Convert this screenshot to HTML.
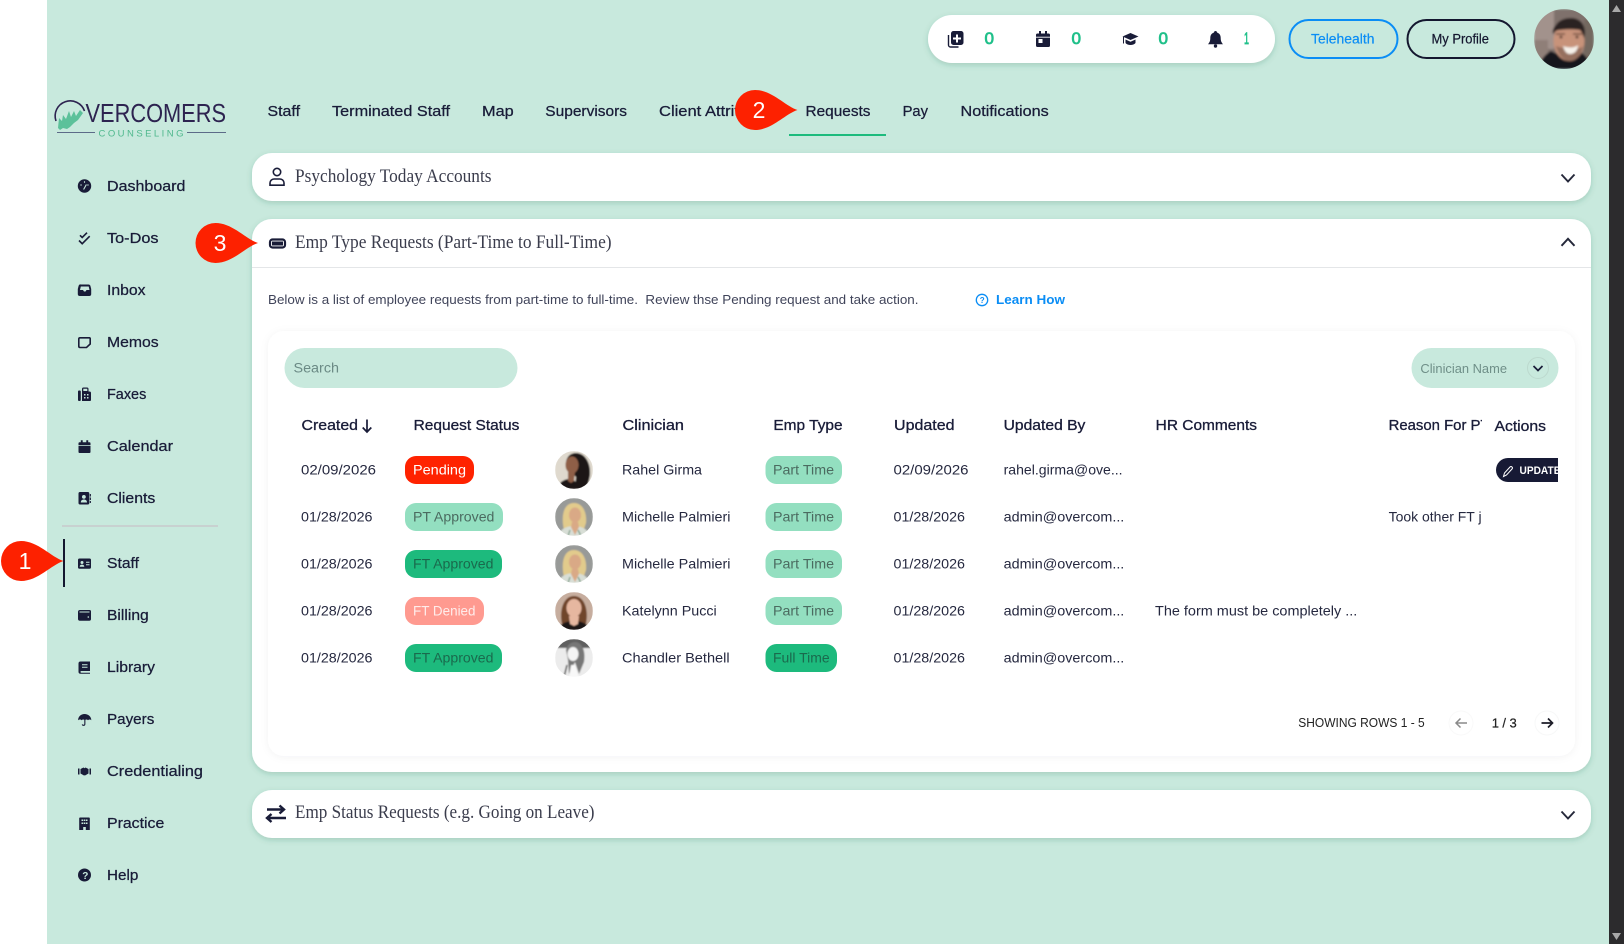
<!DOCTYPE html>
<html lang="en">
<head>
<meta charset="utf-8">
<title>Requests</title>
<style>
html,body{margin:0;padding:0;background:#fff;width:1624px;height:944px;overflow:hidden}
svg{display:block;position:absolute;left:0;top:0}
text{font-family:"Liberation Sans",sans-serif;white-space:pre}
.m{font-size:14.5px;fill:#191c38;stroke:#191c38;stroke-width:.25}
.h{font-size:14.3px;fill:#191c38;stroke:#191c38;stroke-width:.3}
.c{font-size:13.6px;fill:#25283f}
.p{font-size:13.6px}
.s{font-family:"Liberation Serif",serif;font-size:18.5px;fill:#3a3c4c}
.d{font-size:16.5px;fill:#20c08a;stroke:#20c08a;stroke-width:.7}
.w{font-size:23px;fill:#fff}
.i{fill:#191c38}
</style>
</head>
<body>
<svg xmlns="http://www.w3.org/2000/svg" width="1624" height="944" viewBox="0 0 1624 944">
<defs>
<filter id="sh" x="-5%" y="-30%" width="110%" height="170%"><feDropShadow dx="0" dy="2" stdDeviation="3" flood-color="#1d6a50" flood-opacity=".22"/></filter>
<filter id="sh2" x="-5%" y="-5%" width="110%" height="110%"><feDropShadow dx="0" dy="1" stdDeviation="4" flood-color="#30304a" flood-opacity=".05"/></filter>
<filter id="bl"><feGaussianBlur stdDeviation=".7"/></filter>
<filter id="bl2"><feGaussianBlur stdDeviation="1.100"/></filter>
<clipPath id="cr"><rect x="1385" y="410" width="97" height="130"/></clipPath>
<clipPath id="cu"><rect x="1490" y="450" width="68" height="40"/></clipPath>
<clipPath id="a0"><circle cx="1564" cy="39" r="30"/></clipPath>
<clipPath id="a1"><circle cx="574" cy="470" r="19"/></clipPath>
<clipPath id="a2"><circle cx="574" cy="517" r="19"/></clipPath>
<clipPath id="a3"><circle cx="574" cy="564" r="19"/></clipPath>
<clipPath id="a4"><circle cx="574" cy="611" r="19"/></clipPath>
<clipPath id="a5"><circle cx="574" cy="658" r="19"/></clipPath>
</defs>

<!-- page -->
<rect x="47" y="0" width="1562" height="944" fill="#c8e9dd"/>
<rect x="1609" y="0" width="15" height="944" fill="#2c2b2d"/>
<path d="M1616.500 5l4.500 7h-9z" fill="#a8a8a8"/>
<path d="M1612 933h9l-4.500 7z" fill="#a8a8a8"/>

<!-- top pill -->
<rect x="928" y="15" width="347" height="48" rx="24" fill="#fff" filter="url(#sh)"/>
<g class="i">
<path d="M948.500 35v10a2 2 0 0 0 2 2h8" fill="none" stroke="#191c38" stroke-width="1.400"/>
<path fill-rule="evenodd" d="M953.500 31h7.500a2.500 2.500 0 0 1 2.500 2.500v9a2.500 2.500 0 0 1-2.500 2.500h-7.500a2.500 2.500 0 0 1-2.500-2.500v-9a2.500 2.500 0 0 1 2.500-2.500zm2.500 3.500v3h-3v2h3v3h2v-3h3v-2h-3v-3z"/>
<path fill-rule="evenodd" d="M1039 31h2v2.500h4V31h2v2.500h1.500a1.500 1.500 0 0 1 1.500 1.500v10.500a1.500 1.500 0 0 1-1.500 1.500h-11a1.500 1.500 0 0 1-1.500-1.500V35a1.500 1.500 0 0 1 1.500-1.500h1.500zm-.5 8v4h4v-4zM1036 36.700h14v.9h-14z"/>
<path d="M1130.500 33l8 3.500-8 3.500-8-3.500z"/>
<path d="M1125.500 39.500l5 2.200 5-2.200v3.500c-1 1.300-3 2-5 2s-4-.7-5-2z"/>
<rect x="1123" y="37" width="1" height="6.500"/>
<path d="M1215.500 31c1 0 1.500.7 1.500 1.500 2.500.8 3.700 2.800 3.700 5.500 0 3 .8 4.500 2.300 6.200h-15c1.500-1.700 2.300-3.200 2.300-6.200 0-2.700 1.200-4.700 3.700-5.500 0-.8.500-1.500 1.500-1.500z"/>
<circle cx="1215.500" cy="46" r="1.700"/>
</g>
<text class="d" x="984.500" y="44" textLength="9.500" lengthAdjust="spacingAndGlyphs">0</text>
<text class="d" x="1071.500" y="44" textLength="9.500" lengthAdjust="spacingAndGlyphs">0</text>
<text class="d" x="1158.500" y="44" textLength="9.500" lengthAdjust="spacingAndGlyphs">0</text>
<text class="d" x="1244" y="44" textLength="5" lengthAdjust="spacingAndGlyphs">1</text>

<!-- buttons -->
<rect x="1289.500" y="20" width="108" height="38" rx="19" fill="#c8e9dd" stroke="#0a8df5" stroke-width="2"/>
<text x="1311" y="43.500" font-size="13.500" fill="#0a8df5" stroke="#0a8df5" stroke-width=".2" textLength="63.500" lengthAdjust="spacingAndGlyphs">Telehealth</text>
<rect x="1407.500" y="20" width="107" height="38" rx="19" fill="#c8e9dd" stroke="#14172f" stroke-width="2"/>
<text x="1431.500" y="43.500" font-size="13.500" fill="#14172f" stroke="#14172f" stroke-width=".2" textLength="57.500" lengthAdjust="spacingAndGlyphs">My Profile</text>

<!-- man avatar -->
<g clip-path="url(#a0)"><g filter="url(#bl2)">
<rect x="1534" y="9" width="60" height="60" fill="#7f716c"/>
<rect x="1534" y="9" width="20" height="40" fill="#a2928c"/>
<rect x="1534" y="40" width="14" height="30" fill="#8f7f78"/>
<rect x="1584" y="20" width="10" height="40" fill="#73675f"/>
<path d="M1540 69c0-9 4-14 11-18l17 8 14-6c5 4 8 9 9 16z" fill="#15161f"/>
<ellipse cx="1569" cy="41" rx="15.500" ry="20" fill="#c8937a"/>
<path d="M1553 34c-1-4 1-7 3-9 3-5 9-7 15-7 8 0 14 5 14 15l-1 5c-1-3-2-6-4-8-7-1-13-1-20 0-3 0-5 1-7 4z" fill="#2c2320"/>
<path d="M1556 46c3 10 8 15 14 15s11-5 13-15c-3 3-6 3-10 1-4 0-11 2-17-1z" fill="#96705e"/>
<path d="M1563 46c4 2 12 2 15-1 0 5-3 9-8 9-4 0-6-4-7-8z" fill="#f6f1ea"/>
<path d="M1556 34h9M1573 34h9" stroke="#5a3d30" stroke-width="1.300"/>
<circle cx="1561" cy="37" r="1.300" fill="#2a1c18"/><circle cx="1577" cy="37" r="1.300" fill="#2a1c18"/>
</g></g>

<!-- logo -->
<path d="M56 121a15 15 0 0 1 28.500-10" fill="none" stroke="#2d2350" stroke-width="1.600"/>
<path d="M58 128l1-10 3 3 1-6 3 4 3-8 2 6 3-6 2 5 4-6 3 3-5 7-4 3-4 4-3 2-4-1-3 2z" fill="#5cc19a"/>
<text x="85.500" y="122" font-size="26" fill="#2d2350" textLength="140.500" lengthAdjust="spacingAndGlyphs">VERCOMERS</text>
<text x="98.500" y="136.500" font-size="9.500" fill="#4fb88d" textLength="85" lengthAdjust="spacing">COUNSELING</text>
<path d="M57 132.500h38M187 132.500h39" stroke="#5c6b88" stroke-width="1"/>

<!-- tabs -->
<text class="m" x="267.500" y="116" textLength="32.500" lengthAdjust="spacingAndGlyphs">Staff</text>
<text class="m" x="332" y="116" textLength="118" lengthAdjust="spacingAndGlyphs">Terminated Staff</text>
<text class="m" x="482" y="116" textLength="31.700" lengthAdjust="spacingAndGlyphs">Map</text>
<text class="m" x="545.300" y="116" textLength="81.700" lengthAdjust="spacingAndGlyphs">Supervisors</text>
<text class="m" x="659" y="116" textLength="102" lengthAdjust="spacingAndGlyphs">Client Attrition</text>
<text class="m" x="805.500" y="116" textLength="65" lengthAdjust="spacingAndGlyphs">Requests</text>
<text class="m" x="902.600" y="116" textLength="25.400" lengthAdjust="spacingAndGlyphs">Pay</text>
<text class="m" x="960.500" y="116" textLength="88.200" lengthAdjust="spacingAndGlyphs">Notifications</text>
<rect x="789" y="134" width="97" height="2" fill="#1dbb7d"/>

<!-- sidebar text -->
<g>
<text class="m" x="107" y="191" textLength="78.400" lengthAdjust="spacingAndGlyphs">Dashboard</text>
<text class="m" x="107" y="243" textLength="51.500" lengthAdjust="spacingAndGlyphs">To-Dos</text>
<text class="m" x="107" y="295" textLength="38.500" lengthAdjust="spacingAndGlyphs">Inbox</text>
<text class="m" x="107" y="347" textLength="51.700" lengthAdjust="spacingAndGlyphs">Memos</text>
<text class="m" x="107" y="399" textLength="39.300" lengthAdjust="spacingAndGlyphs">Faxes</text>
<text class="m" x="107" y="451" textLength="66" lengthAdjust="spacingAndGlyphs">Calendar</text>
<text class="m" x="107" y="503" textLength="48.300" lengthAdjust="spacingAndGlyphs">Clients</text>
<text class="m" x="107" y="568" textLength="32" lengthAdjust="spacingAndGlyphs">Staff</text>
<text class="m" x="107" y="620" textLength="41.700" lengthAdjust="spacingAndGlyphs">Billing</text>
<text class="m" x="107" y="672" textLength="48" lengthAdjust="spacingAndGlyphs">Library</text>
<text class="m" x="107" y="724" textLength="47.300" lengthAdjust="spacingAndGlyphs">Payers</text>
<text class="m" x="107" y="776" textLength="96" lengthAdjust="spacingAndGlyphs">Credentialing</text>
<text class="m" x="107" y="828" textLength="57.300" lengthAdjust="spacingAndGlyphs">Practice</text>
<text class="m" x="107" y="880" textLength="31.300" lengthAdjust="spacingAndGlyphs">Help</text>
</g>
<rect x="62" y="525.500" width="156" height="1" fill="#c9b9c2"/>
<rect x="63" y="539" width="2" height="48" fill="#14172f"/>

<!-- sidebar icons -->
<g class="i">
<circle cx="84.500" cy="186" r="6.700"/>
<path d="M84.500 181.300v1.500M80.300 185h1.500M87.200 185h1.500M83.600 189.500l2.800-5" stroke="#c8e9dd" stroke-width="1.100" fill="none"/>
<path d="M80 235.300l2.200 2.200 4.800-4.800M79 240.500l3.200 3.200 7.500-7.500" stroke="#191c38" stroke-width="1.600" fill="none"/>
<path fill-rule="evenodd" d="M81 284.500h7.500a2 2 0 0 1 1.900 1.400l.8 3.100v5a2 2 0 0 1-2 2h-9.400a2 2 0 0 1-2-2v-5l.8-3.100a2 2 0 0 1 2.400-1.400zm-.2 2l-.8 3.500h3l1 1.500h1.500l1-1.500h3l-.8-3.500z"/>
<path d="M80 337.800h9.500a.7.700 0 0 1 .7.700V344l-3.700 3.500H80a1.200 1.200 0 0 1-1.200-1.200v-7.300a1.200 1.200 0 0 1 1.200-1.200z" fill="none" stroke="#191c38" stroke-width="1.600"/>
<rect x="78" y="390.500" width="2.800" height="10.500" rx="1"/>
<path fill-rule="evenodd" d="M82 391.500V389a1.500 1.500 0 0 1 1.500-1.500h3.500a1.500 1.500 0 0 1 1.500 1.500v2.500h1a1.500 1.500 0 0 1 1.500 1.500v7a1 1 0 0 1-1 1h-8zm1.300-.5h4v-2.200h-4zm.7 3v1.500h1.500V394zm3 0v1.500h1.500V394zm-3 3v1.500h1.500V397zm3 0v1.500h1.500V397z"/>
<path d="M80.800 440.300h1.900v2h3.600v-2h1.900v2h1.300a1 1 0 0 1 1 1v2H78.500v-2a1 1 0 0 1 1-1h1.300zM78.500 446h12v6a1 1 0 0 1-1 1h-10a1 1 0 0 1-1-1z"/>
<path fill-rule="evenodd" d="M80 492h7.800a1.500 1.500 0 0 1 1.500 1.500v9.500a1.500 1.500 0 0 1-1.500 1.500H80a1.500 1.500 0 0 1-1.500-1.500v-9.500A1.500 1.500 0 0 1 80 492zm3.900 3a1.900 1.900 0 1 0 0 3.800 1.900 1.900 0 0 0 0-3.800zm-3.100 7.500h6.200c0-2-1.300-3-3.100-3s-3.100 1-3.100 3z"/>
<rect x="89.800" y="494" width="1.100" height="2.500"/><rect x="89.800" y="497.500" width="1.100" height="2.500"/><rect x="89.800" y="501" width="1.100" height="2"/>
<path fill-rule="evenodd" d="M79.500 558.500h10a1.500 1.500 0 0 1 1.500 1.500v7.200a1.500 1.500 0 0 1-1.500 1.500h-10a1.500 1.500 0 0 1-1.500-1.500V560a1.500 1.500 0 0 1 1.500-1.500zm2.500 2.500a1.500 1.500 0 1 0 0 3 1.500 1.500 0 0 0 0-3zm-2.300 5.700h4.600c0-1.300-1-2.100-2.300-2.100s-2.300.8-2.300 2.100zm6.300-5v1h3.500v-1zm0 2.500v1h3.500v-1z"/>
<path fill-rule="evenodd" d="M80 610h9.500a1.500 1.500 0 0 1 1.500 1.500v7.500a1.700 1.700 0 0 1-1.700 1.700H79.800A1.800 1.800 0 0 1 78 619V612a2 2 0 0 1 2-2zm8.300 6.200a.8.800 0 1 0 0 1.600.8.800 0 0 0 0-1.600zM79.500 611.500v1h10v-1z"/>
<path fill-rule="evenodd" d="M80.500 661.500H90v9.500H81.300a.9.900 0 0 0 0 1.800H90v1H80.500a2 2 0 0 1-2-2v-8.300a2 2 0 0 1 2-2zm1.500 2.700v1.100h5.500v-1.100zm0 2.500v1.100h5.500v-1.100z"/>
<path d="M84.500 714c3.700 0 6.800 2.600 6.800 6.200-1-.9-2.300-.9-3.300 0-.8-.8-1.700-.9-2.600-.4v4.400a1.900 1.900 0 0 1-3.700.4l1.100-.3a.8.800 0 0 0 1.500-.1v-4.400c-.9-.5-1.800-.4-2.600.4-1-.9-2.300-.9-3.600 0 0-3.600 2.900-6.200 6.400-6.200z"/>
<path d="M78 768.500h1.500v6H78zM89.500 768.500H91v6h-1.500zM80.500 769l3-1.500 1 .7 1-.7 3 1.500v4.500l-3.500 2-.5-.3-.5.3-3.500-2z"/>
<path fill-rule="evenodd" d="M80 817.500h9a.8.800 0 0 1 .8.800v11.700H85.800v-3h-2.600v3H79.200V818.300a.8.800 0 0 1 .8-.8zm1.500 2v1.500h1.600v-1.500zm2.200 0v1.500h1.600v-1.500zm2.200 0v1.500h1.600v-1.500zm-4.400 3v1.500h1.600v-1.500zm2.200 0v1.500h1.600v-1.500zm2.200 0v1.500h1.600v-1.500z"/>
<circle cx="84.500" cy="875" r="6.500"/>
</g>
<text x="82.300" y="878.800" font-size="10" font-weight="700" fill="#c8e9dd">?</text>

<!-- cards -->
<rect x="252" y="153" width="1339" height="48" rx="20" fill="#fff" filter="url(#sh)"/>
<rect x="252" y="219" width="1339" height="553" rx="20" fill="#fff" filter="url(#sh)"/>
<rect x="252" y="267" width="1339" height="1" fill="#e4e6e8"/>
<rect x="252" y="790" width="1339" height="48" rx="20" fill="#fff" filter="url(#sh)"/>

<text class="s" x="295" y="182" textLength="196.500" lengthAdjust="spacingAndGlyphs">Psychology Today Accounts</text>
<text class="s" x="295" y="248" textLength="316.600" lengthAdjust="spacingAndGlyphs">Emp Type Requests (Part-Time to Full-Time)</text>
<text class="s" x="295" y="818" textLength="299.500" lengthAdjust="spacingAndGlyphs">Emp Status Requests (e.g. Going on Leave)</text>

<!-- card icons -->
<circle cx="277" cy="172" r="3.700" fill="none" stroke="#191c38" stroke-width="1.600"/>
<path d="M270 185.200v-2.200a4 4 0 0 1 4-4h6a4 4 0 0 1 4 4v2.200z" fill="none" stroke="#191c38" stroke-width="1.600"/>
<rect x="270" y="239.500" width="15" height="8" rx="2.500" fill="none" stroke="#191c38" stroke-width="2.200"/>
<rect x="272" y="241.500" width="11" height="4" fill="#191c38"/>
<path d="M267 809.500h17M279.500 805.500l4.500 4-4.500 4M286 818h-17M271.500 814l-4.500 4 4.500 4" fill="none" stroke="#191c38" stroke-width="2.400"/>
<path d="M1561.500 174.500l6.500 7 6.500-7" fill="none" stroke="#25283a" stroke-width="1.900"/>
<path d="M1561.500 245.800l6.500-7 6.500 7" fill="none" stroke="#25283a" stroke-width="1.900"/>
<path d="M1561.500 811.500l6.500 7 6.500-7" fill="none" stroke="#25283a" stroke-width="1.900"/>

<!-- description -->
<text x="268" y="304" font-size="12.600" fill="#40445a" textLength="650.500" lengthAdjust="spacingAndGlyphs">Below is a list of employee requests from part-time to full-time.  Review thse Pending request and take action.</text>
<circle cx="982" cy="300" r="5.700" fill="none" stroke="#0a8df5" stroke-width="1.300"/>
<text x="979.800" y="303" font-size="8" font-weight="700" fill="#0a8df5">?</text>
<text x="996" y="304" font-size="13.300" font-weight="700" fill="#0a8df5" textLength="69" lengthAdjust="spacingAndGlyphs">Learn How</text>

<!-- table card -->
<rect x="268" y="331" width="1307" height="425" rx="16" fill="#fff" filter="url(#sh2)"/>
<rect x="284.500" y="348" width="233" height="40" rx="20" fill="#c8e9dd"/>
<text x="293.500" y="372.500" font-size="13.500" fill="#6b8a85" textLength="45.500" lengthAdjust="spacingAndGlyphs">Search</text>
<rect x="1411.500" y="348" width="147" height="40" rx="20" fill="#c8e9dd"/>
<text x="1420.400" y="373" font-size="13" fill="#6f8f88" textLength="86.600" lengthAdjust="spacingAndGlyphs">Clinician Name</text>
<circle cx="1538" cy="368" r="10.500" fill="none" stroke="#bcd9ce" stroke-width="1"/>
<path d="M1533.500 366l4.500 4.500 4.500-4.500" fill="none" stroke="#191c38" stroke-width="1.700"/>

<!-- headers -->
<text class="h" x="301.500" y="430" textLength="56.500" lengthAdjust="spacingAndGlyphs">Created</text>
<path d="M367 419.500v12M362.700 427.500l4.300 4.500 4.300-4.500" fill="none" stroke="#191c38" stroke-width="1.700"/>
<text class="h" x="413.600" y="430" textLength="105.800" lengthAdjust="spacingAndGlyphs">Request Status</text>
<text class="h" x="622.500" y="430" textLength="61.500" lengthAdjust="spacingAndGlyphs">Clinician</text>
<text class="h" x="773.400" y="430" textLength="69.200" lengthAdjust="spacingAndGlyphs">Emp Type</text>
<text class="h" x="894" y="430" textLength="60.600" lengthAdjust="spacingAndGlyphs">Updated</text>
<text class="h" x="1003.600" y="430" textLength="81.800" lengthAdjust="spacingAndGlyphs">Updated By</text>
<text class="h" x="1155.700" y="430" textLength="101.300" lengthAdjust="spacingAndGlyphs">HR Comments</text>
<g clip-path="url(#cr)">
<text class="h" x="1388.600" y="430" textLength="101" lengthAdjust="spacingAndGlyphs">Reason For PT</text>
<text class="c" x="1388.600" y="521.500" textLength="93" lengthAdjust="spacingAndGlyphs">Took other FT j</text>
</g>
<text class="h" x="1494.500" y="431" textLength="51.500" lengthAdjust="spacingAndGlyphs">Actions</text>

<!-- rows: dates -->
<text class="c" x="301" y="474.500" textLength="75" lengthAdjust="spacingAndGlyphs">02/09/2026</text>
<text class="c" x="301" y="521.500" textLength="71.500" lengthAdjust="spacingAndGlyphs">01/28/2026</text>
<text class="c" x="301" y="568.500" textLength="71.500" lengthAdjust="spacingAndGlyphs">01/28/2026</text>
<text class="c" x="301" y="615.500" textLength="71.500" lengthAdjust="spacingAndGlyphs">01/28/2026</text>
<text class="c" x="301" y="662.500" textLength="71.500" lengthAdjust="spacingAndGlyphs">01/28/2026</text>

<!-- status pills -->
<rect x="405" y="456" width="69" height="28" rx="11" fill="#ff2200"/>
<text class="p" x="413" y="474.500" fill="#fff" textLength="53" lengthAdjust="spacingAndGlyphs">Pending</text>
<rect x="405" y="503" width="98" height="28" rx="11" fill="#93dfc0"/>
<text class="p" x="413" y="521.500" fill="#4b6b60" textLength="81.400" lengthAdjust="spacingAndGlyphs">PT Approved</text>
<rect x="405" y="550" width="97" height="28" rx="11" fill="#1dba7d"/>
<text class="p" x="413" y="568.500" fill="#1a6a4d" textLength="80.500" lengthAdjust="spacingAndGlyphs">FT Approved</text>
<rect x="405" y="597" width="79" height="28" rx="11" fill="#ff9a90"/>
<text class="p" x="413" y="615.500" fill="#ffecea" textLength="62.500" lengthAdjust="spacingAndGlyphs">FT Denied</text>
<rect x="405" y="644" width="97" height="28" rx="11" fill="#1dba7d"/>
<text class="p" x="413" y="662.500" fill="#1a6a4d" textLength="80.500" lengthAdjust="spacingAndGlyphs">FT Approved</text>

<!-- avatars -->
<g clip-path="url(#a1)"><g filter="url(#bl)">
<rect x="555" y="451" width="38" height="38" fill="#dfd9ce"/>
<path d="M566 462c1-6 5-9 10-9 9 0 15 10 14 22-1 6-2 10-5 14h-10l1-12-9-9z" fill="#1f1715"/>
<ellipse cx="572" cy="465" rx="6.500" ry="8.500" fill="#8f5f47"/>
<path d="M558 489l3-7c3-2 5-3 8-3 4 0 6 2 8 4l1 6z" fill="#1a1412"/>
<path d="M568 472h7l-1 9-3 2-3-2z" fill="#8f5f47"/>
</g></g>
<g clip-path="url(#a2)"><g filter="url(#bl)">
<rect x="555" y="498" width="38" height="38" fill="#989a98"/>
<path d="M564 530c-3-13-1-27 10-27 9 0 13 10 12 20l-2 6z" fill="#e2cb8c"/>
<ellipse cx="575" cy="515" rx="6" ry="7.500" fill="#d9a986"/>
<path d="M558 536c2-7 9-10 16-10s14 3 16 10z" fill="#d8ded6"/>
<path d="M572 522h6l1 5-4 8-4-8z" fill="#d9a986"/>
<path d="M578 530l3 6M570 530l-2 6" stroke="#5a8a70" stroke-width="1"/>
</g></g>
<g clip-path="url(#a3)"><g filter="url(#bl)">
<rect x="555" y="545" width="38" height="38" fill="#989a98"/>
<path d="M564 577c-3-13-1-27 10-27 9 0 13 10 12 20l-2 6z" fill="#e2cb8c"/>
<ellipse cx="575" cy="562" rx="6" ry="7.500" fill="#d9a986"/>
<path d="M558 583c2-7 9-10 16-10s14 3 16 10z" fill="#d8ded6"/>
<path d="M572 569h6l1 5-4 8-4-8z" fill="#d9a986"/>
<path d="M578 577l3 6M570 577l-2 6" stroke="#5a8a70" stroke-width="1"/>
</g></g>
<g clip-path="url(#a4)"><g filter="url(#bl)">
<rect x="555" y="592" width="38" height="38" fill="#c6ad9e"/>
<path d="M562 624c-3-15 2-28 12-28 10 0 15 13 12 28l-5-2-12 0z" fill="#70452c"/>
<ellipse cx="574" cy="608" rx="7.500" ry="9" fill="#e6b7a0"/>
<path d="M558 630c2-6 7-9 16-9s14 3 16 9z" fill="#1c1716"/>
<path d="M569 616h10l-1 8-4 2-4-2z" fill="#e6b7a0"/>
</g></g>
<g clip-path="url(#a5)"><g filter="url(#bl)">
<rect x="555" y="639" width="38" height="38" fill="#ececec"/>
<rect x="555" y="639" width="38" height="9" fill="#5f5f5f"/>
<path d="M566 650c1-5 5-8 9-8 7 0 11 9 9 20l-5 12-4-12-6 12-1-14z" fill="#777"/>
<ellipse cx="573" cy="654" rx="5.500" ry="7" fill="#f4f4f4"/>
<path d="M569 677l2-12 4 0 4 12z" fill="#f8f8f8"/>
<path d="M564 677l3-12" stroke="#444" stroke-width="1.500"/>
</g></g>

<!-- names -->
<text class="c" x="622" y="474.500" textLength="80" lengthAdjust="spacingAndGlyphs">Rahel Girma</text>
<text class="c" x="622" y="521.500" textLength="108.500" lengthAdjust="spacingAndGlyphs">Michelle Palmieri</text>
<text class="c" x="622" y="568.500" textLength="108.500" lengthAdjust="spacingAndGlyphs">Michelle Palmieri</text>
<text class="c" x="622" y="615.500" textLength="94.700" lengthAdjust="spacingAndGlyphs">Katelynn Pucci</text>
<text class="c" x="622" y="662.500" textLength="107.600" lengthAdjust="spacingAndGlyphs">Chandler Bethell</text>

<!-- emp type pills -->
<rect x="765.500" y="456" width="76.500" height="28" rx="11" fill="#93dfc0"/>
<text class="p" x="773" y="474.500" fill="#4b6b60" textLength="61" lengthAdjust="spacingAndGlyphs">Part Time</text>
<rect x="765.500" y="503" width="76.500" height="28" rx="11" fill="#93dfc0"/>
<text class="p" x="773" y="521.500" fill="#4b6b60" textLength="61" lengthAdjust="spacingAndGlyphs">Part Time</text>
<rect x="765.500" y="550" width="76.500" height="28" rx="11" fill="#93dfc0"/>
<text class="p" x="773" y="568.500" fill="#4b6b60" textLength="61" lengthAdjust="spacingAndGlyphs">Part Time</text>
<rect x="765.500" y="597" width="76.500" height="28" rx="11" fill="#93dfc0"/>
<text class="p" x="773" y="615.500" fill="#4b6b60" textLength="61" lengthAdjust="spacingAndGlyphs">Part Time</text>
<rect x="765.500" y="644" width="71.500" height="28" rx="11" fill="#1dba7d"/>
<text class="p" x="773" y="662.500" fill="#1a6a4d" textLength="56.600" lengthAdjust="spacingAndGlyphs">Full Time</text>

<!-- updated -->
<text class="c" x="893.500" y="474.500" textLength="75" lengthAdjust="spacingAndGlyphs">02/09/2026</text>
<text class="c" x="893.500" y="521.500" textLength="71.500" lengthAdjust="spacingAndGlyphs">01/28/2026</text>
<text class="c" x="893.500" y="568.500" textLength="71.500" lengthAdjust="spacingAndGlyphs">01/28/2026</text>
<text class="c" x="893.500" y="615.500" textLength="71.500" lengthAdjust="spacingAndGlyphs">01/28/2026</text>
<text class="c" x="893.500" y="662.500" textLength="71.500" lengthAdjust="spacingAndGlyphs">01/28/2026</text>

<text class="c" x="1003.600" y="474.500" textLength="119" lengthAdjust="spacingAndGlyphs">rahel.girma@ove...</text>
<text class="c" x="1003.600" y="521.500" textLength="120.700" lengthAdjust="spacingAndGlyphs">admin@overcom...</text>
<text class="c" x="1003.600" y="568.500" textLength="120.700" lengthAdjust="spacingAndGlyphs">admin@overcom...</text>
<text class="c" x="1003.600" y="615.500" textLength="120.700" lengthAdjust="spacingAndGlyphs">admin@overcom...</text>
<text class="c" x="1003.600" y="662.500" textLength="120.700" lengthAdjust="spacingAndGlyphs">admin@overcom...</text>
<text class="c" x="1155" y="615.500" textLength="202.300" lengthAdjust="spacingAndGlyphs">The form must be completely ...</text>

<!-- update button -->
<g clip-path="url(#cu)">
<rect x="1496" y="458" width="80" height="24" rx="12" fill="#171a35"/>
<path d="M1503.500 476.500l1-3.500 5.500-6a1.400 1.400 0 0 1 2 2l-5.500 6z" fill="none" stroke="#fff" stroke-width="1"/>
<text x="1519.500" y="474" font-size="11" font-weight="700" fill="#fff" textLength="41" lengthAdjust="spacingAndGlyphs">UPDATE</text>
</g>

<!-- pagination -->
<text x="1298.300" y="727" font-size="12.500" fill="#222" textLength="126.400" lengthAdjust="spacingAndGlyphs">SHOWING ROWS 1 - 5</text>
<circle cx="1461" cy="723" r="12" fill="none" stroke="#f9f9f9"/>
<circle cx="1547" cy="723" r="12" fill="none" stroke="#f7f8f8"/>
<path d="M1467 723h-11M1460.500 718.500l-4.500 4.500 4.500 4.500" fill="none" stroke="#8a8a8a" stroke-width="1.500"/>
<text x="1491.700" y="727.500" font-size="13" fill="#222" stroke="#222" stroke-width=".2" textLength="25" lengthAdjust="spacing">1 / 3</text>
<path d="M1541.500 723h11M1548 718.500l4.500 4.500-4.500 4.500" fill="none" stroke="#1d1d28" stroke-width="1.700"/>

<!-- annotation markers -->
<path d="M63.500 561C51 557 38 541 21 541a20 20 0 0 0 0 40C38 581 51 565 63.500 561Z" fill="#fd2100"/>
<text class="w" x="25" y="569" text-anchor="middle">1</text>
<path d="M797.500 110C785 106 772 90 755 90a20 20 0 0 0 0 40C772 130 785 114 797.500 110Z" fill="#fd2100"/>
<text class="w" x="759" y="118" text-anchor="middle">2</text>
<path d="M258 243C245.500 239 232.500 223 215.500 223a20 20 0 0 0 0 40C232.500 263 245.500 247 258 243Z" fill="#fd2100"/>
<text class="w" x="220" y="251" text-anchor="middle">3</text>
</svg>
</body>
</html>
